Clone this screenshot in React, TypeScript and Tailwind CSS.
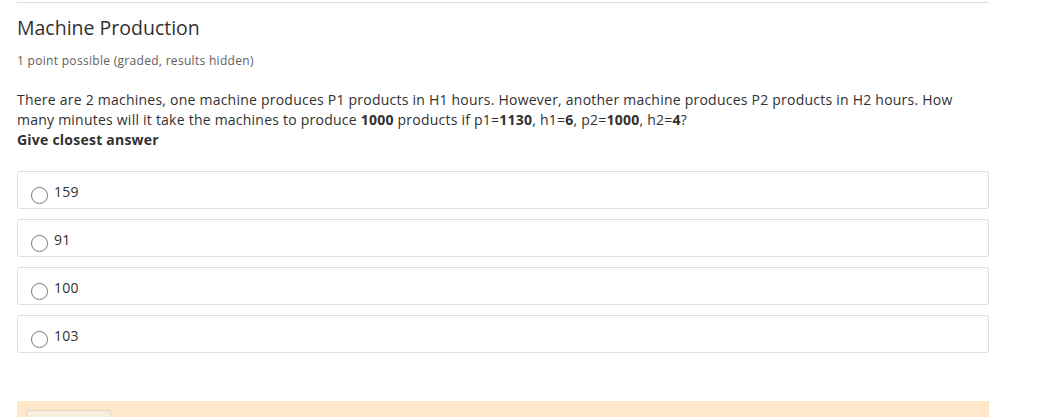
import { FC } from 'react';

const options = ['159', '91', '100', '103'];

const Choice: FC<{ label: string }> = ({ label }) => (
    <label className="flex h-[38px] items-start rounded-[3px] border border-[#dddddd] pl-[13px] pt-[10px]">
        <span className="mt-[5px] block h-[17px] w-[17px] shrink-0 rounded-full border border-[#767676] bg-white" />
        <span className="ml-[6px] text-[14px] leading-[20px] tracking-[0.3px] text-[#313131]">
            {label}
        </span>
    </label>
);

export default function App() {
    return (
        <div className="bg-white pl-[17px] font-['Open_Sans',sans-serif]">
            <div className="w-[972px]">
                <div className="mt-[2px] border-t border-[#dddddd]" />
                <h2 className="mt-[11px] text-[19.5px] leading-[28px] font-normal text-[#313131]">
                    Machine Production
                </h2>
                <div className="mt-[10px] text-[12px] leading-[18px] tracking-[0.3px] text-[#5e5e5e]">
                    1 point possible (graded, results hidden)
                </div>
                <p className="mt-[20px] text-[14px] leading-[20px] tracking-[0.23px] text-[#313131]">
                    There are 2 machines, one machine produces P1 products in H1 hours. However, another
                    machine produces P2 products in H2 hours. How many minutes will it take the machines to
                    produce <b>1000</b> products if p1=<b>1130</b>, h1=<b>6</b>, p2=<b>1000</b>, h2=<b>4</b>?
                    <br />
                    <b>Give closest answer</b>
                </p>
                <div className="mt-[21px] flex flex-col gap-[10px]">
                    {options.map((o) => (
                        <Choice key={o} label={o} />
                    ))}
                </div>
                <div className="mt-[48px] h-[20px] bg-[#fee8c9] pl-[9px] pt-[9px]">
                    <div className="h-[11px] w-[85px] rounded-t-[3px] border border-b-0 border-[#e3d6c2] bg-[#f8eee0]" />
                </div>
            </div>
        </div>
    );
}
